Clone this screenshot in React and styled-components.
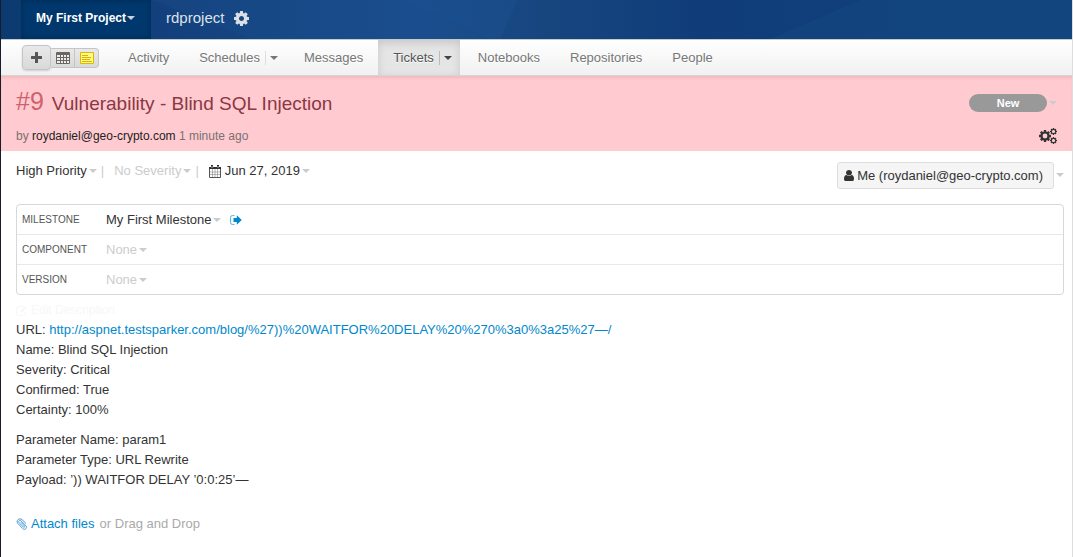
import React from 'react';
import styled, { createGlobalStyle, css } from 'styled-components';

const GlobalStyle = createGlobalStyle`
  * {
    box-sizing: border-box;
  }

  body {
    margin: 0;
    background: #fff;
    color: #333;
    font-family: "Liberation Sans", Arial, sans-serif;
    font-size: 13px;
    line-height: 20px;
  }

  button {
    margin: 0;
    padding: 0;
    border: 0;
    background: none;
    color: inherit;
    font: inherit;
    cursor: pointer;
  }

  a {
    color: #08c;
    text-decoration: none;
  }

  svg {
    display: block;
    flex: none;
  }
`;

const Page = styled.div`
  min-height: 100vh;
  border-left: 1px solid #191b26;
  border-right: 1px solid #ddd;
`;

const TopBar = styled.header`
  position: relative;
  display: flex;
  align-items: center;
  height: 39px;
  padding: 0 20px 3px;
  background: linear-gradient(90deg, #0b3a70 0, #13407c 150px, #1a4c8b 420px, #17467f 540px, #103d79 700px, #11427d 100%);
`;

const Facets = styled.svg`
  position: absolute;
  inset: 0;
  width: 100%;
  height: 100%;
`;

const ProjectButton = styled.button`
  position: relative;
  display: flex;
  align-items: center;
  align-self: flex-start;
  height: 39px;
  padding: 0 16px 3px 15px;
  background: #00386d;
  box-shadow: inset 0 0 6px rgba(0, 0, 0, 0.25);
  color: #fff;
  font-size: 12px;
  font-weight: bold;
`;

const ProjectName = styled.a`
  position: relative;
  margin: 0 10px 0 15px;
  color: #dce3ec;
  font-size: 15px;
`;

const IconButton = styled.button`
  position: relative;
  display: flex;
  color: ${({ $color }) => $color || 'inherit'};
`;

const Caret = styled.span`
  display: inline-block;
  margin-left: ${({ $gap }) => $gap || 0}px;
  border-top: 4px solid ${({ $color }) => $color || '#ccc'};
  border-right: 4px solid transparent;
  border-left: 4px solid transparent;
`;

const Nav = styled.nav`
  display: flex;
  align-items: center;
  height: 37px;
  padding-left: 21px;
  border-top: 1px solid #c4cbd4;
  border-bottom: 1px solid #d5d5d5;
  background: linear-gradient(#fff, #f1f1f1);
`;

const Tools = styled.div`
  display: flex;
  align-items: center;
  margin-right: 14px;
`;

const toolFace = css`
  display: flex;
  align-items: center;
  justify-content: center;
  border: 1px solid #c5c5c5;
  background: linear-gradient(#e9e9e9, #d9d9d9);
`;

const AddButton = styled.button`
  ${toolFace}
  width: 29px;
  height: 25px;
  border-radius: 4px;
  box-shadow: 0 1px 2px rgba(0, 0, 0, 0.15);
  color: #555;
`;

const ToolButton = styled.button`
  ${toolFace}
  width: 24px;
  height: 20px;
  border-left: 0;
  border-radius: ${({ $last }) => ($last ? '0 4px 4px 0' : 0)};
`;

const Tab = styled.div`
  display: flex;
  align-items: center;
  height: 35px;
  padding: 0 ${({ $split }) => ($split ? 8 : 15)}px 0 15px;
  margin-right: ${({ $split }) => ($split ? 3 : 0)}px;
  color: ${({ $active }) => ($active ? '#555' : '#777')};
  text-shadow: 0 1px 0 #fff;

  ${({ $active }) =>
    $active &&
    css`
      background: #e5e5e5;
      box-shadow: inset 0 3px 8px rgba(0, 0, 0, 0.13);
    `}

  a {
    color: inherit;
  }
`;

const TabMenu = styled.button`
  display: flex;
  align-items: center;
  height: 14px;
  margin-left: 5px;
  padding-left: 4px;
  border-left: 1px solid ${({ $active }) => ($active ? '#bbb' : '#ddd')};
`;

const TicketHeader = styled.section`
  display: flex;
  justify-content: space-between;
  height: 75px;
  padding: 10px 15px 5px;
  background: #ffcbd0;
  box-shadow: inset 0 3px 3px -1px rgba(150, 60, 60, 0.12);
`;

const Title = styled.h1`
  margin: 0 0 7px;
  color: #8c3744;
  font-size: 19px;
  font-weight: normal;
  line-height: 30px;
`;

const TicketNumber = styled.span`
  margin-right: 8px;
  color: #d0616c;
  font-size: 25px;
`;

const Byline = styled.p`
  margin: 0;
  color: #7a7070;
  font-size: 12px;

  a {
    color: #222;
  }
`;

const StatusColumn = styled.div`
  display: flex;
  flex-direction: column;
  align-items: flex-end;
  justify-content: space-between;
  padding: 8px 0 2px;
`;

const Dropdown = styled.button`
  display: flex;
  align-items: center;
  color: ${({ $muted }) => ($muted ? '#ccc' : '#333')};
`;

const StatusPill = styled.span`
  width: 78px;
  height: 18px;
  border-radius: 9px;
  background: #999;
  color: #fff;
  font-size: 11px;
  font-weight: bold;
  line-height: 18px;
`;

const Meta = styled.div`
  display: flex;
  align-items: flex-start;
  justify-content: space-between;
  padding: 10px 8px 15px 15px;
`;

const MetaList = styled.div`
  display: flex;
  align-items: center;
`;

const Divider = styled.span`
  margin: 0 10px 0 4px;
  color: #ccc;
`;

const DateIcon = styled.span`
  margin-right: 4px;
`;

const Assignee = styled.span`
  display: flex;
  align-items: center;
  gap: 3px;
  height: 27px;
  margin-top: 1px;
  padding: 0 10px 0 6px;
  border: 1px solid #ddd;
  border-radius: 3px;
  background: #f5f5f5;
`;

const Fields = styled.dl`
  margin: 0 8px 0 15px;
  border: 1px solid #d8d8d8;
  border-radius: 4px;
`;

const Field = styled.div`
  box-sizing: content-box;
  display: grid;
  grid-template-columns: 84px 1fr;
  align-items: center;
  height: 29px;
  padding: 0 5px;

  & + & {
    border-top: 1px solid #e8e8e8;
  }

  dt {
    color: #555;
    font-size: 10px;
  }

  dd {
    display: flex;
    align-items: center;
    gap: 9px;
    margin: 0;
  }
`;

const Content = styled.main`
  padding: 5px 15px 20px;
`;

const EditButton = styled.button`
  display: flex;
  align-items: center;
  gap: 3px;
  color: #f7f7f7;
  font-size: 12px;
`;

const Paragraph = styled.p`
  margin: 0 0 10px;
`;

const Attach = styled.div`
  display: flex;
  align-items: center;
  gap: 5px;
  margin-top: 24px;
  color: #aaa;

  a {
    display: flex;
    align-items: center;
    gap: 3px;
  }
`;

const COG_PATH =
  'M1152 896q0-106-75-181t-181-75-181 75-75 181 75 181 181 75 181-75 75-181zm512-109v222q0 12-8 23t-20 13l-185 28q-19 54-39 91 35 50 107 138 10 12 10 25t-9 23q-27 37-99 108t-94 71q-12 0-26-9l-138-108q-44 23-91 38-16 136-29 186-7 28-36 28h-222q-14 0-24.5-8.5t-11.5-21.5l-28-184q-49-16-90-37l-141 107q-10 9-25 9-14 0-25-11-126-114-165-168-7-10-7-23 0-12 8-23 15-21 51-66.5t54-70.5q-27-50-41-99l-183-27q-13-2-21-12.5t-8-23.5v-222q0-12 8-23t19-13l186-28q14-46 39-92-40-57-107-138-10-12-10-24 0-10 9-23 26-36 98.5-107.5t94.5-71.5q13 0 26 10l138 107q44-23 91-38 16-136 29-186 7-28 36-28h222q14 0 24.5 8.5t11.5 21.5l28 184q49 16 90 37l142-107q9-9 24-9 13 0 25 10 129 119 165 170 7 8 7 22 0 12-8 23-15 21-51 66.5t-54 70.5q26 50 41 98l183 28q13 2 21 12.5t8 23.5z';

const CogIcon = () => (
  <svg width="15" height="15" viewBox="128 128 1536 1536" fill="currentColor">
    <path d={COG_PATH} />
  </svg>
);

const CogsIcon = () => (
  <svg width="18" height="16" viewBox="0 0 18 16" fill="currentColor">
    <svg x="0" y="2" width="12" height="12" viewBox="128 128 1536 1536">
      <path d={COG_PATH} />
      <circle cx="896" cy="896" r="310" fill="#ffcbd0" />
    </svg>
    <svg x="11" y="0" width="7" height="7" viewBox="128 128 1536 1536">
      <path d={COG_PATH} />
      <circle cx="896" cy="896" r="330" fill="#ffcbd0" />
    </svg>
    <svg x="11" y="9" width="7" height="7" viewBox="128 128 1536 1536">
      <path d={COG_PATH} />
      <circle cx="896" cy="896" r="330" fill="#ffcbd0" />
    </svg>
  </svg>
);

const PlusIcon = () => (
  <svg width="11" height="11" viewBox="0 0 11 11" fill="currentColor">
    <path d="M4 .5Q4 0 4.500 0h2q.5 0 .5.500V4h3.500q.5 0 .5.500v2q0 .5-.5.500H7v3.500q0 .5-.5.500h-2q-.5 0-.5-.500V7H.500Q0 7 0 6.500v-2Q0 4 .500 4H4z" />
  </svg>
);

const TableIcon = () => (
  <svg width="14" height="12" viewBox="0 0 14 12">
    <rect width="14" height="12" rx="1" fill="#6b6663" />
    <path
      d="M1 3h3v2H1zM5 3h2v2H5zM8 3h2v2H8zM11 3h2v2h-2zM1 6h3v2H1zM5 6h2v2H5zM8 6h2v2H8zM11 6h2v2h-2zM1 9h3v2H1zM5 9h2v2H5zM8 9h2v2H8zM11 9h2v2h-2z"
      fill="#eee"
    />
  </svg>
);

const NoteIcon = () => (
  <svg width="14" height="12" viewBox="0 0 14 12">
    <path d="M.5.5h13v11H.5z" fill="#fffa8c" stroke="#e0b800" />
    <path d="M2 3.500h6M2 5.500h9M2 7.500h8M2 9.500h10" stroke="#dcb400" />
  </svg>
);

const CalendarIcon = () => (
  <svg width="12" height="13" viewBox="0 0 12 13">
    <path d="M.5 2.500h11v10H.500z" fill="#fff" stroke="#555" />
    <path d="M0 2h12v2H0z" fill="#333" />
    <path d="M2 0h2v4H2zM8 0h2v4H8z" fill="#333" />
    <path d="M3 1v2M9 1v2" stroke="#fff" strokeWidth=".6" />
    <path d="M3.500 4v8M6 4v8M8.500 4v8M1 7h10M1 9.500h10" stroke="#888" strokeWidth=".6" />
  </svg>
);

const UserIcon = () => (
  <svg width="10" height="11" viewBox="256 128 1280 1536" preserveAspectRatio="none" fill="currentColor">
    <path d="M1536 1399q0 109-62.5 187t-150.5 78h-854q-88 0-150.5-78t-62.5-187q0-85 8.5-160.5t31.5-152 58.5-131 94-89 134.5-34.5q131 128 313 128t313-128q76 0 134.5 34.5t94 89 58.5 131 31.5 152 8.5 160.5zm-256-887q0 159-112.5 271.5t-271.5 112.5-271.5-112.5-112.5-271.5 112.5-271.5 271.5-112.5 271.5 112.5 112.5 271.5z" />
  </svg>
);

const SignOutIcon = () => (
  <svg width="12" height="10" viewBox="0 0 12 10">
    <path d="M4.500.6H2.200Q.600.600.600 2.200v5.600q0 1.600 1.600 1.600h2.300" fill="none" stroke="#5aaede" strokeWidth="1" />
    <path d="M3.500 3h3.300V.200L11.800 5 6.800 9.800V7H3.500z" fill="#08c" />
  </svg>
);

const EditIcon = () => (
  <svg width="12" height="11" viewBox="0 0 12 11" fill="none" stroke="currentColor">
    <path d="M8 1.500H2.500q-2 0-2 2v5q0 2 2 2h5q2 0 2-2V7" />
    <path d="M5 7l5-5" strokeWidth="2" />
  </svg>
);

const ClipIcon = () => (
  <svg width="12" height="12" viewBox="0 0 12 12" fill="none" stroke="#3f8fd0" strokeWidth=".9">
    <path d="M10 5.500L6 1.600C3.500-.500-.300 2.400 1.600 5.200l5 5.300c2.400 2.200 5.200-.600 3.300-2.800L5 2.900C3.500 1.700 1.900 3.200 3 4.500l4.400 4.600c.9.700 1.800-.2 1.100-1.100L4.800 4.200" />
  </svg>
);

const TABS = [
  { label: 'Activity' },
  { label: 'Schedules', split: true },
  { label: 'Messages' },
  { label: 'Tickets', split: true, active: true },
  { label: 'Notebooks' },
  { label: 'Repositories' },
  { label: 'People' },
];

const App = () => {
  return (
    <>
      <GlobalStyle />
      <Page>
        <TopBar>
          <Facets viewBox="0 0 1072 39" preserveAspectRatio="none" aria-hidden="true">
            <path d="M400 0L517 0 500 39 488 39z" fill="#1c5090" opacity=".5" />
            <path d="M400 0L488 39H250L151 0z" fill="#1d5395" opacity=".2" />
            <path d="M860 0H1072V39H770z" fill="#13487f" opacity=".5" />
          </Facets>
          <ProjectButton type="button">
            My First Project
            <Caret $gap={1} $color="#c8d4e2" />
          </ProjectButton>
          <ProjectName href="#">rdproject</ProjectName>
          <IconButton type="button" aria-label="Project settings" $color="#dce0e5">
            <CogIcon />
          </IconButton>
        </TopBar>

        <Nav>
          <Tools>
            <AddButton type="button" aria-label="Add">
              <PlusIcon />
            </AddButton>
            <ToolButton type="button" aria-label="Table">
              <TableIcon />
            </ToolButton>
            <ToolButton type="button" aria-label="Note" $last>
              <NoteIcon />
            </ToolButton>
          </Tools>
          {TABS.map(({ label, split, active }) => (
            <Tab key={label} $split={split} $active={active}>
              <a href="#">{label}</a>
              {split && (
                <TabMenu type="button" aria-label={`${label} menu`} $active={active}>
                  <Caret $color={active ? '#444' : '#777'} />
                </TabMenu>
              )}
            </Tab>
          ))}
        </Nav>

        <TicketHeader>
          <div>
            <Title>
              <TicketNumber>#9</TicketNumber>
              Vulnerability - Blind SQL Injection
            </Title>
            <Byline>
              by <a href="#">roydaniel@geo-crypto.com</a> 1 minute ago
            </Byline>
          </div>
          <StatusColumn>
            <Dropdown type="button">
              <StatusPill>New</StatusPill>
              <Caret $gap={2} />
            </Dropdown>
            <IconButton type="button" aria-label="Ticket actions" $color="#333">
              <CogsIcon />
            </IconButton>
          </StatusColumn>
        </TicketHeader>

        <Meta>
          <MetaList>
            <Dropdown type="button">
              High Priority
              <Caret $gap={2} />
            </Dropdown>
            <Divider>|</Divider>
            <Dropdown type="button" $muted>
              No Severity
              <Caret $gap={2} />
            </Dropdown>
            <Divider>|</Divider>
            <Dropdown type="button">
              <DateIcon>
                <CalendarIcon />
              </DateIcon>
              Jun 27, 2019
              <Caret $gap={2} />
            </Dropdown>
          </MetaList>
          <Dropdown type="button">
            <Assignee>
              <UserIcon />
              Me (roydaniel@geo-crypto.com)
            </Assignee>
            <Caret $gap={2} />
          </Dropdown>
        </Meta>

        <Fields>
          <Field>
            <dt>MILESTONE</dt>
            <dd>
              <Dropdown type="button">
                My First Milestone
                <Caret $gap={2} />
              </Dropdown>
              <a href="#" aria-label="Open milestone">
                <SignOutIcon />
              </a>
            </dd>
          </Field>
          <Field>
            <dt>COMPONENT</dt>
            <dd>
              <Dropdown type="button" $muted>
                None
                <Caret $gap={2} />
              </Dropdown>
            </dd>
          </Field>
          <Field>
            <dt>VERSION</dt>
            <dd>
              <Dropdown type="button" $muted>
                None
                <Caret $gap={2} />
              </Dropdown>
            </dd>
          </Field>
        </Fields>

        <Content>
          <EditButton type="button">
            <EditIcon />
            Edit Description
          </EditButton>
          <Paragraph>
            URL: <a href="#">http://aspnet.testsparker.com/blog/%27))%20WAITFOR%20DELAY%20%270%3a0%3a25%27—/</a>
            <br />
            Name: Blind SQL Injection
            <br />
            Severity: Critical
            <br />
            Confirmed: True
            <br />
            Certainty: 100%
          </Paragraph>
          <Paragraph>
            Parameter Name: param1
            <br />
            Parameter Type: URL Rewrite
            <br />
            Payload: ’)) WAITFOR DELAY ’0:0:25’—
          </Paragraph>
          <Attach>
            <a href="#">
              <ClipIcon />
              Attach files
            </a>
            or Drag and Drop
          </Attach>
        </Content>
      </Page>
    </>
  );
};

export default App;
